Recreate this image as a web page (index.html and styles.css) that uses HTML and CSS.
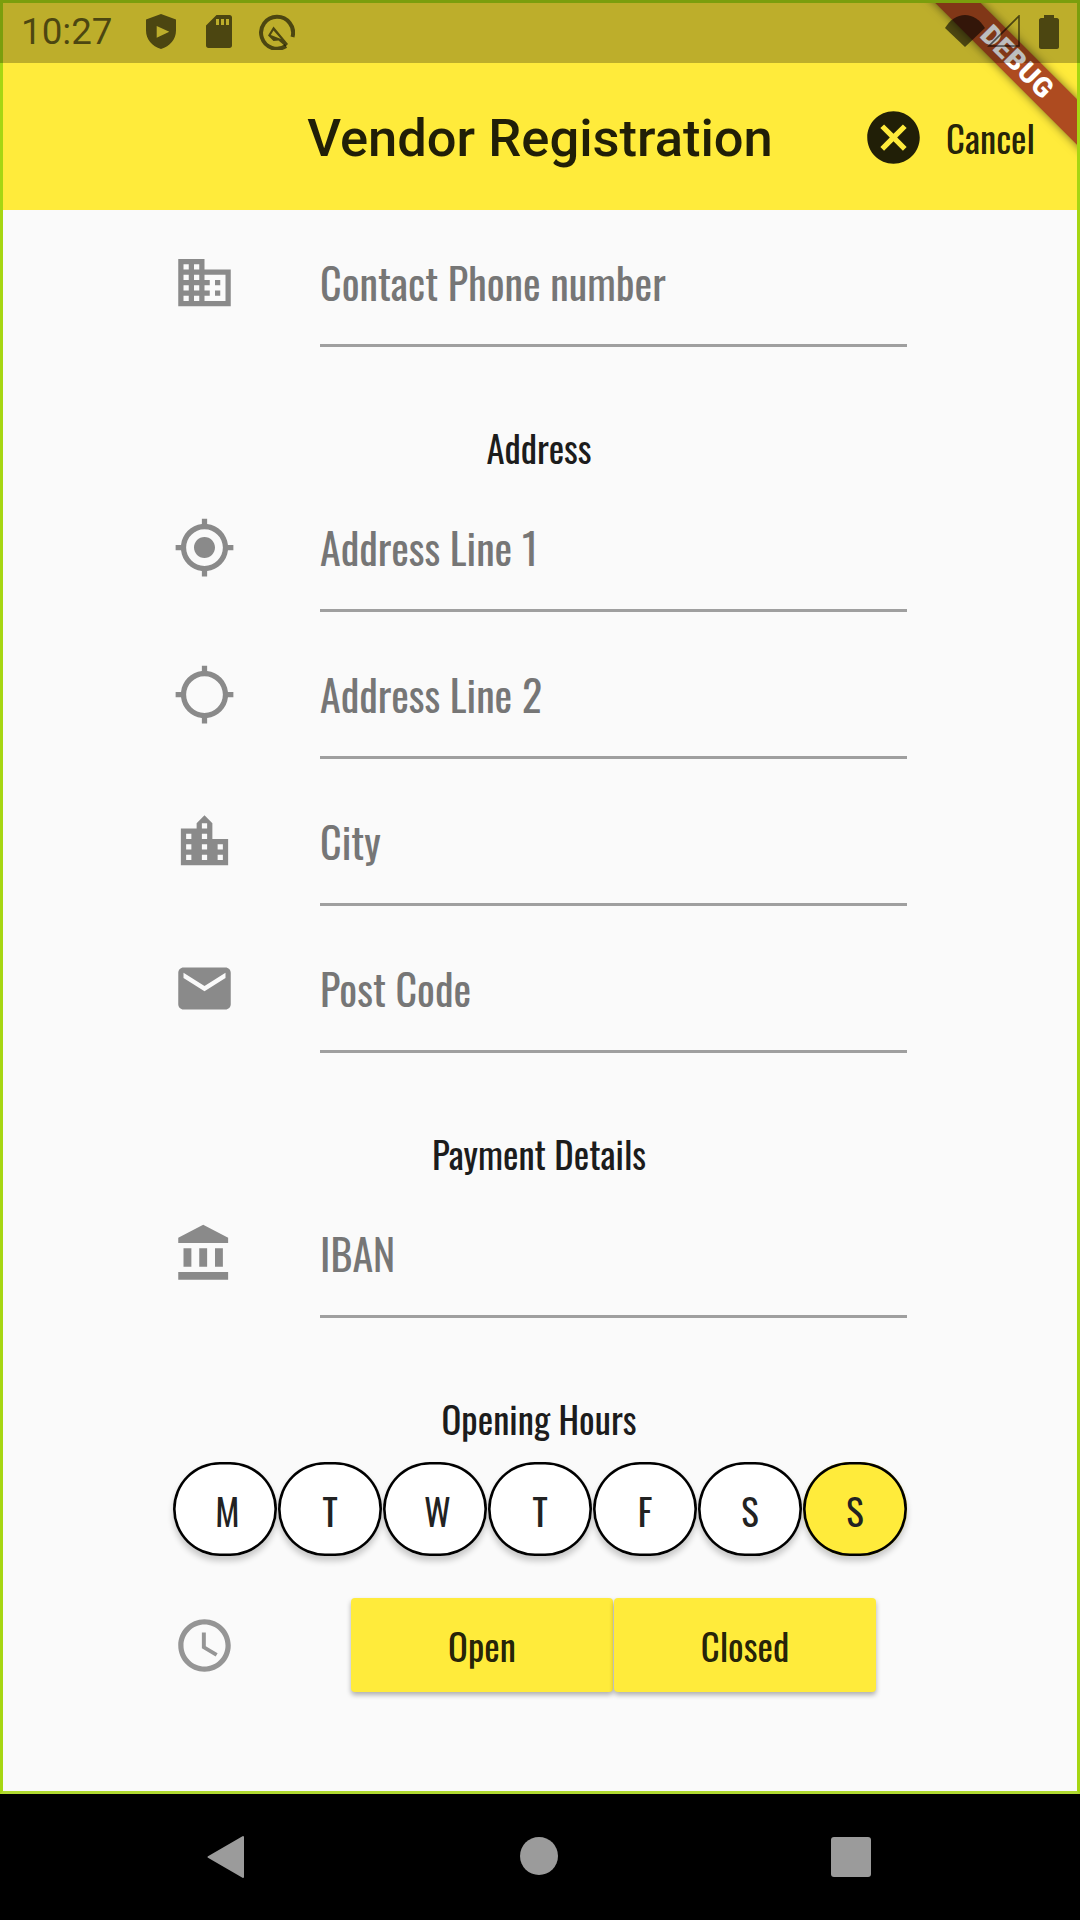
FILE: index.html
```html
<!DOCTYPE html>
<html lang="en">
<head>
<meta charset="utf-8">
<title>Vendor Registration</title>
<link rel="stylesheet" href="styles.css">
</head>
<body>
<div class="app">
  <header class="appbar">
    <h1 class="title">Vendor Registration</h1>
    <button class="cancel">
      <svg class="icon" viewBox="0 0 24 24"><path d="M12 2C6.47 2 2 6.47 2 12s4.47 10 10 10 10-4.47 10-10S17.53 2 12 2zm5 13.59L15.59 17 12 13.41 8.41 17 7 15.59 10.59 12 7 8.41 8.41 7 12 10.59 15.59 7 17 8.41 13.41 12 17 15.59z"/></svg>
      <span>Cancel</span>
    </button>
  </header>

  <main class="form">
    <div class="row">
      <svg class="icon field-icon" viewBox="0 0 24 24"><path d="M12 7V3H2v18h20V7H12zM6 19H4v-2h2v2zm0-4H4v-2h2v2zm0-4H4V9h2v2zm0-4H4V5h2v2zm4 12H8v-2h2v2zm0-4H8v-2h2v2zm0-4H8V9h2v2zm0-4H8V5h2v2zm10 12h-8v-2h2v-2h-2v-2h2v-2h-2V9h8v10zm-2-8h-2v2h2v-2zm0 4h-2v2h2v-2z"/></svg>
      <div class="field">Contact Phone number</div>
    </div>

    <h2 class="section">Address</h2>
    <div class="row">
      <svg class="icon field-icon" viewBox="0 0 24 24"><path d="M12 8c-2.21 0-4 1.79-4 4s1.79 4 4 4 4-1.79 4-4-1.79-4-4-4zm8.94 3c-.46-4.17-3.77-7.48-7.94-7.94V1h-2v2.06C6.83 3.52 3.52 6.83 3.06 11H1v2h2.06c.46 4.17 3.77 7.48 7.94 7.94V23h2v-2.06c4.17-.46 7.48-3.77 7.94-7.94H23v-2h-2.06zM12 19c-3.87 0-7-3.13-7-7s3.13-7 7-7 7 3.13 7 7-3.13 7-7 7z"/></svg>
      <div class="field">Address Line 1</div>
    </div>
    <div class="row spaced">
      <svg class="icon field-icon" viewBox="0 0 24 24"><path d="M20.94 11c-.46-4.17-3.77-7.48-7.94-7.94V1h-2v2.06C6.83 3.52 3.52 6.83 3.06 11H1v2h2.06c.46 4.17 3.77 7.48 7.94 7.94V23h2v-2.06c4.17-.46 7.48-3.77 7.94-7.94H23v-2h-2.06zM12 19c-3.87 0-7-3.13-7-7s3.13-7 7-7 7 3.13 7 7-3.13 7-7 7z"/></svg>
      <div class="field">Address Line 2</div>
    </div>
    <div class="row spaced">
      <svg class="icon field-icon" viewBox="0 0 24 24"><path d="M15 11V5l-3-3-3 3v2H3v14h18V11h-6zm-8 8H5v-2h2v2zm0-4H5v-2h2v2zm0-4H5V9h2v2zm6 8h-2v-2h2v2zm0-4h-2v-2h2v2zm0-4h-2V9h2v2zm0-4h-2V5h2v2zm6 12h-2v-2h2v2zm0-4h-2v-2h2v2z"/></svg>
      <div class="field">City</div>
    </div>
    <div class="row spaced">
      <svg class="icon field-icon" viewBox="0 0 24 24"><path d="M20 4H4c-1.1 0-1.99.9-1.99 2L2 18c0 1.1.9 2 2 2h16c1.1 0 2-.9 2-2V6c0-1.1-.9-2-2-2zm0 4l-8 5-8-5V6l8 5 8-5v2z"/></svg>
      <div class="field">Post Code</div>
    </div>

    <h2 class="section">Payment Details</h2>
    <div class="row">
      <svg class="icon field-icon" viewBox="0 0 24 24"><path d="M4 10v7h3v-7H4zm6 0v7h3v-7h-3zM2 22h19v-3H2v3zm14-12v7h3v-7h-3zm-4.5-9L2 6v2h19V6l-9.5-5z"/></svg>
      <div class="field">IBAN</div>
    </div>

    <h2 class="section section-tight">Opening Hours</h2>
    <div class="days">
      <button class="day day-wide">M</button>
      <button class="day">T</button>
      <button class="day day-wide">W</button>
      <button class="day">T</button>
      <button class="day">F</button>
      <button class="day">S</button>
      <button class="day day-on">S</button>
    </div>
    <div class="hours">
      <svg class="icon clock" viewBox="0 0 24 24"><path d="M11.99 2C6.47 2 2 6.48 2 12s4.47 10 9.99 10C17.52 22 22 17.52 22 12S17.52 2 11.99 2zM12 20c-4.42 0-8-3.58-8-8s3.58-8 8-8 8 3.58 8 8-3.58 8-8 8zm.5-13H11v6l5.25 3.15.75-1.23-4.5-2.67z"/></svg>
      <div class="hour-buttons">
        <button class="hour">Open</button>
        <button class="hour">Closed</button>
      </div>
    </div>
  </main>

  <div class="ribbon">DEBUG</div>
</div>

<div class="scrim"></div>
<div class="status">
  <div class="status-left">
    <span class="time">10:27</span>
    <svg class="s-shield" viewBox="0 0 30 35"><path fill-rule="evenodd" d="M15 0L30 5.500V16.500C30 25 24 32.500 15 35 6 32.500 0 25 0 16.500V5.500zM10.700 12V23.700L23.300 17.800z"/></svg>
    <svg class="s-sd" viewBox="0 0 26 33"><path fill-rule="evenodd" d="M10.500 0H23.500C25 0 26 1 26 2.500V30.500C26 32 25 33 23.500 33H2.500C1 33 0 32 0 30.500V10.500zM10 4V10H13V4zM15 4V10H18V4zM20 4V10H23V4z"/></svg>
    <svg class="s-q" viewBox="0 0 36 36"><path class="q-ring" d="M33.500 23A16 16 0 1 0 27 32"/><path fill-rule="evenodd" d="M14.500 12.500L29 30 26.500 32.500 19.500 26.500 14.500 27 9 21.500zM14.500 16.500L22 25 11.800 21z"/></svg>
  </div>
  <div class="status-right">
    <svg class="s-wifi" viewBox="0 0 40 32"><path d="M0 13C5 5 12 0 20 0S35 5 40 13L20 32z"/></svg>
    <svg class="s-signal" viewBox="0 0 33 32"><path d="M32 1V31H2z"/></svg>
    <svg class="s-battery" viewBox="0 0 20 34"><path d="M5 0H15V3H18C19 3 20 4 20 5V32C20 33 19 34 18 34H2C1 34 0 33 0 32V5C0 4 1 3 2 3H5z"/></svg>
  </div>
</div>

<nav class="navbar">
  <svg class="nav-back" viewBox="0 0 38 44"><path d="M1.500 22L36 2V42z"/></svg>
  <span class="nav-home"></span>
  <span class="nav-recent"></span>
</nav>
</body>
</html>
```
FILE: styles.css
```css
* { box-sizing: border-box; }
html, body { margin: 0; padding: 0; }
body {
  width: 1080px;
  height: 1920px;
  background: #000;
  display: flex;
  flex-direction: column;
  position: relative;
  overflow: hidden;
  font-family: "Oswald", "Liberation Sans", sans-serif;
}
button { font: inherit; border: 0; padding: 0; margin: 0; background: none; color: inherit; }

.app {
  height: 1794px;
  flex: none;
  background: #fafafa;
  border: 3px solid #a6d612;
  border-bottom-color: #b0da30;
  position: relative;
  overflow: hidden;
}

/* App bar */
.appbar {
  height: 207px;
  padding-top: 62px;
  background: #ffeb3b;
  display: flex;
  align-items: center;
  justify-content: center;
  position: relative;
  color: rgba(0, 0, 0, .87);
}
.title {
  margin: 0;
  font-family: Roboto, sans-serif;
  font-weight: 500;
  font-size: 52.5px;
  line-height: 70px;
}
.cancel {
  position: absolute;
  right: 42px;
  top: 60px;
  height: 147px;
  display: flex;
  align-items: center;
  gap: 21px;
  font-size: 36.750px;
  line-height: 54px;
}
.cancel span { padding-top: 2px; }
.cancel .icon { margin-top: 1px; }
.icon { width: 63px; height: 63px; flex: none; display: block; fill: currentColor; }

/* Form */
.form { padding: 17px 0 0 170px; width: 904px; }
.row { display: flex; align-items: flex-start; height: 120px; gap: 84px; }
.spaced { margin-top: 27px; }
.field-icon { margin-top: 24px; color: #8a8a8a; }
.field {
  flex: 1;
  height: 120px;
  padding-bottom: 8px;
  border-bottom: 3px solid #9f9f9f;
  display: flex;
  align-items: center;
  font-size: 42px;
  line-height: 62px;
  color: #767676;
}
.section {
  margin: 76px 0 19px;
  padding-right: 2px;
  font-weight: 400;
  font-size: 36.750px;
  line-height: 50px;
  text-align: center;
  color: #1c1c1c;
}
.section-tight { margin-bottom: 18px; }

/* Opening hours */
.days { display: grid; grid-template-columns: repeat(7, 104px); gap: 1px; }
.day {
  height: 94px;
  padding-top: 3px;
  border-radius: 47px;
  background: #fff;
  box-shadow: inset 0 0 0 2.600px #000, 0 5px 6px rgba(0, 0, 0, .2);
  font-size: 36.750px;
  line-height: 54px;
  color: #222;
  display: flex;
  align-items: center;
  justify-content: center;
}
.day-wide { padding-left: 5px; }
.day-on { background: #ffeb3b; }
.hours { display: flex; align-items: center; margin-top: 42px; gap: 115px; }
.clock { color: #959595; }
.hour-buttons { display: grid; grid-template-columns: repeat(2, 262px); gap: 1px; }
.hour {
  height: 94px;
  padding-top: 2px;
  border-radius: 4px;
  background: #ffeb3b;
  box-shadow: 0 3px 5px rgba(0, 0, 0, .3);
  font-size: 36.750px;
  line-height: 54px;
  color: rgba(0, 0, 0, .87);
}

/* Debug ribbon */
.ribbon {
  position: absolute;
  left: 864px;
  top: 43px;
  width: 300px;
  height: 32px;
  line-height: 32px;
  transform: rotate(45deg);
  background: #ae4b20;
  box-shadow: 0 0 10px rgba(0, 0, 0, .55);
  color: #fff;
  font-family: Roboto, sans-serif;
  font-weight: 900;
  font-size: 27.5px;
  letter-spacing: .5px;
  text-align: center;
}

/* System bars */
.scrim {
  position: absolute;
  left: 0;
  top: 0;
  width: 1080px;
  height: 63px;
  background: rgba(0, 0, 0, .26);
}
.status {
  position: absolute;
  left: 0;
  top: 0;
  width: 1080px;
  height: 63px;
  padding: 0 21px 0 21px;
  display: flex;
  align-items: center;
  justify-content: space-between;
  color: rgba(0, 0, 0, .6);
  fill: rgba(0, 0, 0, .6);
}
.status-left, .status-right { display: flex; align-items: center; }
.time { font-family: Roboto, sans-serif; font-size: 36.750px; line-height: 42px; width: 125px; }
.s-shield { width: 30px; height: 35px; }
.s-sd { width: 26px; height: 33px; margin-left: 30px; }
.s-q { width: 36px; height: 36px; margin-left: 27px; }
.q-ring { fill: none; stroke: rgba(0, 0, 0, .6); stroke-width: 4; }
.s-wifi { width: 40px; height: 32px; margin-bottom: 2px; }
.s-signal { width: 33px; height: 32px; margin-left: 2px; margin-bottom: 2px; fill: none; stroke: rgba(0, 0, 0, .6); stroke-width: 1.600; }
.s-battery { width: 20px; height: 34px; margin-left: 19px; }

.navbar {
  flex: 1;
  display: flex;
  align-items: center;
  padding-left: 207px;
}
.nav-back { width: 38px; height: 44px; display: block; fill: #9b9b9b; stroke: #9b9b9b; stroke-width: 2; stroke-linejoin: round; margin-right: 275px; }
.nav-home { width: 38px; height: 38px; border-radius: 50%; background: #9b9b9b; margin-right: 273px; margin-bottom: 2px; }
.nav-recent { width: 40px; height: 40px; border-radius: 3px; background: #9b9b9b; }
```
